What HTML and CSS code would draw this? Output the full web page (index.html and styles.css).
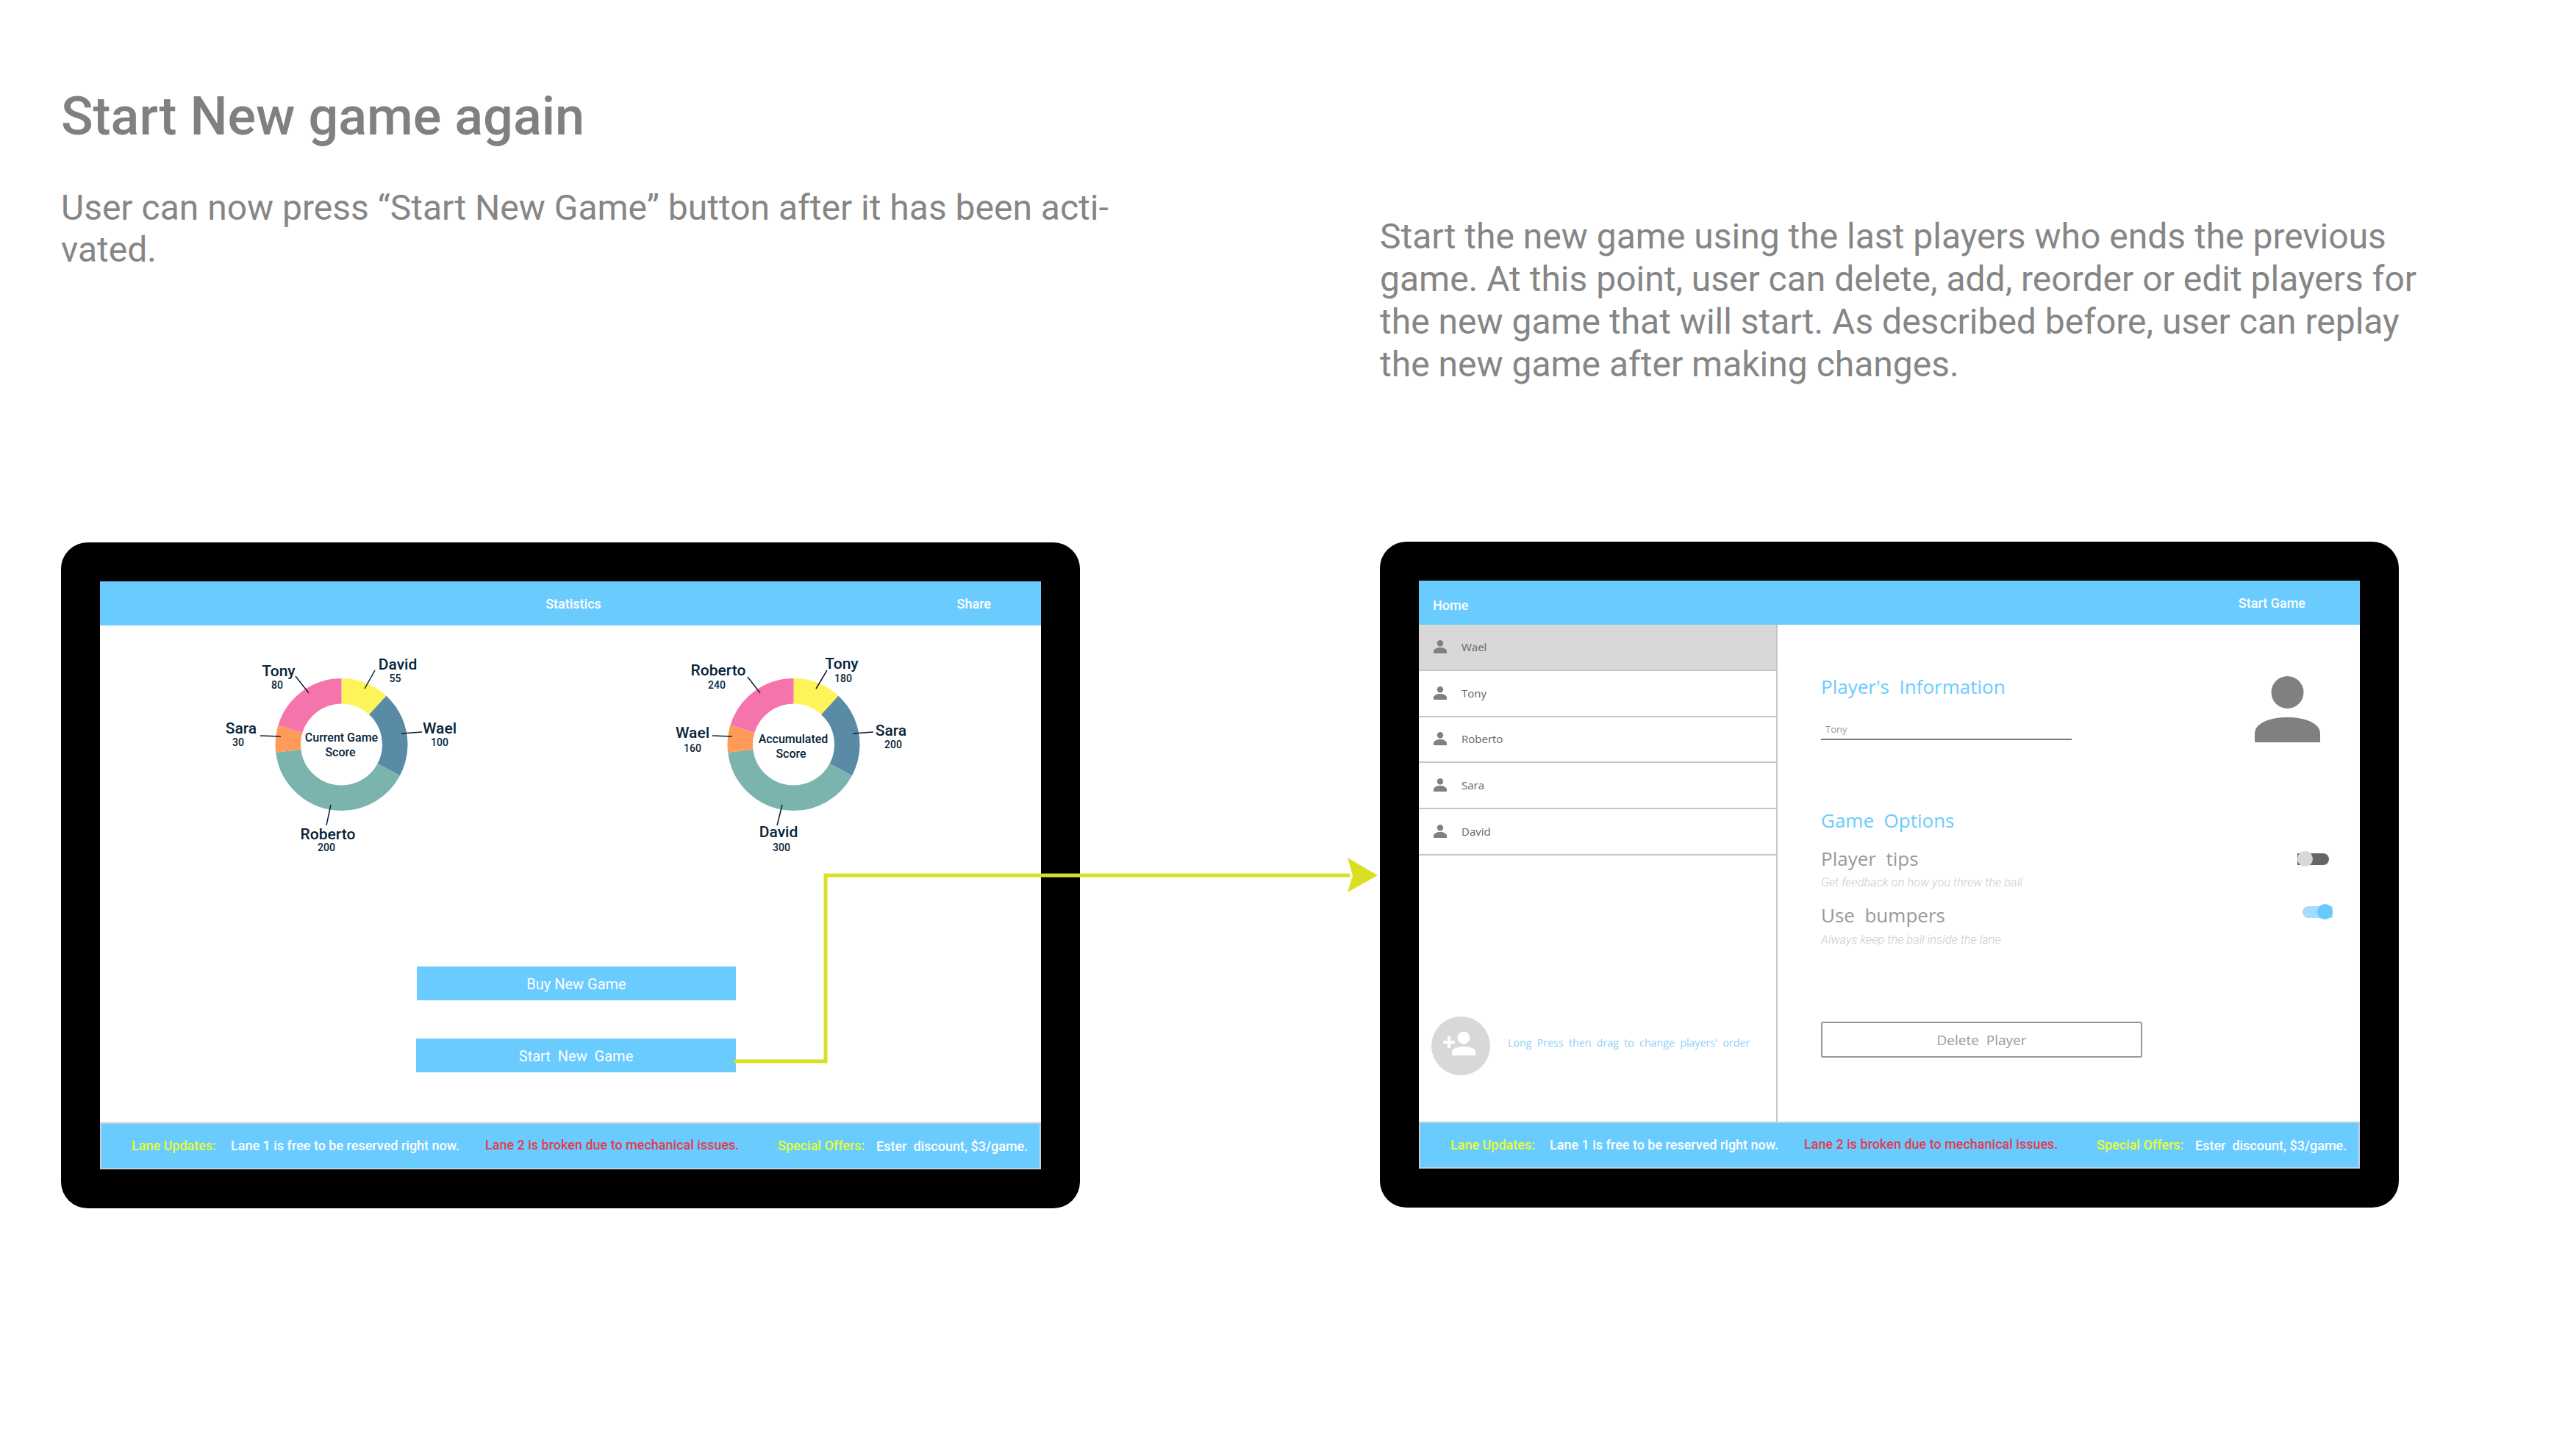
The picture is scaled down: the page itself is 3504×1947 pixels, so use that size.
FILE: index.html
```html
<!DOCTYPE html>
<html>
<head>
  <title>Start New game again</title>
  <link rel="stylesheet" href="styles.css">
</head>
<body>
  <div class="board">

    <section class="note">
      <h1>Start New game again</h1>
      <p>User can now press “Start New Game” button after it has been acti-<br>vated.</p>
    </section>

    <section class="note note-right">
      <p>Start the new game using the last players who ends the previous<br>game. At this point, user can delete, add, reorder or edit players for<br>the new game that will start. As described before, user can replay<br>the new game after making changes.</p>
    </section>

    <!-- tablet 1: statistics -->
    <div class="tablet tablet-left">
      <div class="screen">
        <header class="topbar">
          <span class="topbar-title">Statistics</span>
          <span class="topbar-action">Share</span>
        </header>
        <main class="stats">
          <svg class="charts" viewBox="136 851 1280 330">
            <g transform="translate(464.5 1013)">
              <g class="donut" transform="rotate(-90)">
                <circle r="72.75" pathLength="360" stroke="#fff35a" stroke-dasharray="42.6 360"/>
                <circle r="72.75" pathLength="360" stroke="#5a8ba6" stroke-dasharray="75.4 360" stroke-dashoffset="-42.6"/>
                <circle r="72.75" pathLength="360" stroke="#7bb4ae" stroke-dasharray="145 360" stroke-dashoffset="-118"/>
                <circle r="72.75" pathLength="360" stroke="#ff9a59" stroke-dasharray="24 360" stroke-dashoffset="-263"/>
                <circle r="72.75" pathLength="360" stroke="#f674ac" stroke-dasharray="73 360" stroke-dashoffset="-287"/>
              </g>
            </g>
            <g class="leaders">
              <path d="M402 920 420 943"/>
              <path d="M510 912 496 937"/>
              <path d="M354 1001 382 1002"/>
              <path d="M574 996 546 998"/>
              <path d="M450 1095 444 1123"/>
            </g>
            <text class="name" x="379" y="920">Tony</text>
            <text class="score" x="377" y="937">80</text>
            <text class="name" x="541" y="911">David</text>
            <text class="score" x="537.5" y="928">55</text>
            <text class="name" x="328" y="998">Sara</text>
            <text class="score" x="324" y="1015">30</text>
            <text class="name" x="598" y="998">Wael</text>
            <text class="score" x="598" y="1015">100</text>
            <text class="name" x="446" y="1142">Roberto</text>
            <text class="score" x="444" y="1158">200</text>
            <text class="center" x="464.5" y="1009">Current Game</text>
            <text class="center" x="463" y="1029">Score</text>

            <g transform="translate(1079.5 1013)">
              <g class="donut" transform="rotate(-90)">
                <circle r="72.75" pathLength="360" stroke="#fff35a" stroke-dasharray="42.6 360"/>
                <circle r="72.75" pathLength="360" stroke="#5a8ba6" stroke-dasharray="75.4 360" stroke-dashoffset="-42.6"/>
                <circle r="72.75" pathLength="360" stroke="#7bb4ae" stroke-dasharray="145 360" stroke-dashoffset="-118"/>
                <circle r="72.75" pathLength="360" stroke="#ff9a59" stroke-dasharray="24 360" stroke-dashoffset="-263"/>
                <circle r="72.75" pathLength="360" stroke="#f674ac" stroke-dasharray="73 360" stroke-dashoffset="-287"/>
              </g>
            </g>
            <g class="leaders">
              <path d="M1017 921 1034 943"/>
              <path d="M1125 912 1110 937"/>
              <path d="M969 1001 996 1002"/>
              <path d="M1188 996 1160 998"/>
              <path d="M1064 1095 1057 1123"/>
            </g>
            <text class="name" x="977" y="919">Roberto</text>
            <text class="score" x="975" y="937">240</text>
            <text class="name" x="1145" y="910">Tony</text>
            <text class="score" x="1147" y="928">180</text>
            <text class="name" x="942" y="1004">Wael</text>
            <text class="score" x="942" y="1023">160</text>
            <text class="name" x="1212" y="1001">Sara</text>
            <text class="score" x="1215" y="1018">200</text>
            <text class="name" x="1059" y="1139">David</text>
            <text class="score" x="1063" y="1158">300</text>
            <text class="center" x="1079" y="1011">Accumulated</text>
            <text class="center" x="1076" y="1031">Score</text>
          </svg>
          <div class="stats-actions">
            <button class="blue-btn">Buy New Game</button>
            <button class="blue-btn start-btn">Start  New  Game</button>
          </div>
        </main>
        <footer class="ticker">
          <span class="tick tick-yellow tick-a">Lane Updates:</span>
          <span class="tick tick-b">Lane 1 is free to be reserved right now.</span>
          <span class="tick tick-red tick-c">Lane 2 is broken due to mechanical issues.</span>
          <span class="tick tick-yellow tick-d">Special Offers:</span>
          <span class="tick tick-e">Ester  discount, $3/game.</span>
        </footer>
      </div>
    </div>

    <!-- tablet 2: player setup -->
    <div class="tablet">
      <div class="screen">
        <header class="topbar topbar-home">
          <span class="topbar-home-link">Home</span>
          <span class="topbar-action">Start Game</span>
        </header>
        <div class="setup">
          <aside class="players">
            <ul class="player-list">
              <li class="player player-active">
                <svg class="player-icon" viewBox="0 0 18 18"><circle cx="9" cy="4.2" r="4.2"/><path d="M0 18v-2.6C0 12 4.5 10 9 10s9 2 9 5.4V18z"/></svg>
                Wael
              </li>
              <li class="player">
                <svg class="player-icon" viewBox="0 0 18 18"><circle cx="9" cy="4.2" r="4.2"/><path d="M0 18v-2.6C0 12 4.5 10 9 10s9 2 9 5.4V18z"/></svg>
                Tony
              </li>
              <li class="player">
                <svg class="player-icon" viewBox="0 0 18 18"><circle cx="9" cy="4.2" r="4.2"/><path d="M0 18v-2.6C0 12 4.5 10 9 10s9 2 9 5.4V18z"/></svg>
                Roberto
              </li>
              <li class="player">
                <svg class="player-icon" viewBox="0 0 18 18"><circle cx="9" cy="4.2" r="4.2"/><path d="M0 18v-2.6C0 12 4.5 10 9 10s9 2 9 5.4V18z"/></svg>
                Sara
              </li>
              <li class="player">
                <svg class="player-icon" viewBox="0 0 18 18"><circle cx="9" cy="4.2" r="4.2"/><path d="M0 18v-2.6C0 12 4.5 10 9 10s9 2 9 5.4V18z"/></svg>
                David
              </li>
            </ul>
            <div class="add-row">
              <div class="add-btn">
                <svg viewBox="0 0 80 80" class="add-icon"><circle cx="44" cy="29" r="8.5"/><path d="M28 53v-5c0-4.500 8-7 16-7s16 2.500 16 7v5z"/><path d="M26 33h6v4h-6v6h-4v-6h-6v-4h6v-6h4z"/></svg>
              </div>
              <span class="add-hint">Long  Press  then  drag  to  change  players'  order</span>
            </div>
          </aside>
          <section class="details">
            <div class="info-row">
              <div class="info-form">
                <h2 class="section-title">Player's  Information</h2>
                <div class="field">Tony</div>
              </div>
              <svg class="avatar" viewBox="0 0 89 90"><ellipse cx="44.5" cy="22" rx="22" ry="22"/><path d="M0 90V78C0 64 20 56 44.5 56S89 64 89 78v12z"/></svg>
            </div>
            <h2 class="section-title options-title">Game  Options</h2>
            <div class="option">
              <div>
                <div class="option-name">Player  tips</div>
                <div class="option-hint">Get feedback on how you threw the ball</div>
              </div>
              <span class="toggle"></span>
            </div>
            <div class="option option-second">
              <div>
                <div class="option-name">Use  bumpers</div>
                <div class="option-hint">Always keep the ball inside the lane</div>
              </div>
              <span class="toggle toggle-on"></span>
            </div>
            <button class="delete-btn">Delete  Player</button>
          </section>
        </div>
        <footer class="ticker">
          <span class="tick tick-yellow tick-a">Lane Updates:</span>
          <span class="tick tick-b">Lane 1 is free to be reserved right now.</span>
          <span class="tick tick-red tick-c">Lane 2 is broken due to mechanical issues.</span>
          <span class="tick tick-yellow tick-d">Special Offers:</span>
          <span class="tick tick-e">Ester  discount, $3/game.</span>
        </footer>
      </div>
    </div>

    <!-- arrow from Start New Game to the next screen -->
    <svg class="connector" viewBox="0 0 3504 1947">
      <path class="connector-line" d="M999 1444H1123V1191H1836"/>
      <path class="connector-head" d="M1833 1167 1874 1191 1833 1214 1840 1191z"/>
    </svg>
  </div>
</body>
</html>
```

FILE: styles.css
```css
html, body {
  margin: 0;
  background-color: #fff;
}

body {
  font-family: Roboto, "Liberation Sans", sans-serif;
}

.board {
  position: relative;
  width: 3504px;
  height: 1947px;
  overflow: hidden;
  box-sizing: border-box;
  padding-left: 83px;
  display: grid;
  grid-template-columns: 1386px 1386px;
  grid-template-rows: 737px 906px;
  column-gap: 408px;
}

/* text above the tablets */
.note {
  color: #808080;
}

.note h1 {
  margin: 0;
  padding-top: 117px;
  font-size: 72px;
  line-height: 84px;
  font-weight: 500;
}

.note p {
  margin: 0;
  padding-top: 53px;
  font-size: 48px;
  line-height: 57px;
  font-weight: 400;
  white-space: nowrap;
  color: #868686;
}

.note-right p {
  padding-top: 293px;
  line-height: 58px;
}

/* tablets */
.tablet {
  background-color: #000;
  border-radius: 36px;
  padding: 53px 54px 54px 53px;
  box-sizing: border-box;
  height: 906px;
}

.tablet-left {
  margin-top: 1px;
}

.screen {
  background-color: #fff;
  width: 1280px;
  height: 800px;
  display: flex;
  flex-direction: column;
}

.topbar {
  height: 60px;
  flex-shrink: 0;
  background-color: #6acbff;
  color: #fff;
  font-size: 18px;
  font-weight: 500;
  display: flex;
  align-items: center;
  justify-content: center;
  position: relative;
}

.topbar-title {
  margin-left: 8px;
}

.topbar-action {
  position: absolute;
  right: 68px;
}

.topbar-home {
  justify-content: flex-start;
  padding-left: 19px;
}

.topbar-home .topbar-action {
  right: 74px;
}

.topbar-home-link {
  position: relative;
  top: 3px;
}

/* statistics screen */
.stats {
  flex: 1;
}

.charts {
  display: block;
  width: 1280px;
  height: 330px;
}

.donut circle {
  fill: none;
  stroke-width: 34.5;
}

.leaders path {
  fill: none;
  stroke: #10202c;
  stroke-width: 1.5;
}

.charts text {
  text-anchor: middle;
  fill: #05233a;
  font-weight: 500;
}

.charts .name {
  font-size: 21px;
}

.charts .score {
  font-size: 14px;
}

.charts .center {
  font-size: 16px;
}

.stats-actions {
  display: flex;
  flex-direction: column;
  gap: 52px;
  padding: 134px 0 0 431px;
}

.blue-btn {
  width: 434px;
  height: 46px;
  border: none;
  padding: 2px 0 0;
  background-color: #6acbff;
  color: #fff;
  font-family: inherit;
  font-size: 20px;
  font-weight: 400;
  white-space: pre;
}

.start-btn {
  margin-left: -1px;
  width: 435px;
}

/* lane ticker */
.ticker {
  height: 64px;
  box-sizing: border-box;
  flex-shrink: 0;
  background-color: #6acbff;
  border: 2px solid #bcd2df;
  position: relative;
  font-size: 18px;
  font-weight: 500;
}

.tick {
  position: absolute;
  top: 17px;
  line-height: 26px;
  color: #fff;
  white-space: pre;
}

.tick-yellow {
  color: #eaff2a;
}

.tick-red {
  color: #e23a4c;
  top: 16px;
}

.tick-a { left: 41px; }
.tick-b { left: 176px; }
.tick-c { left: 522px; }
.tick-d { left: 920px; }
.tick-e { left: 1054px; top: 18px; }

/* player setup screen */
.setup {
  flex: 1;
  display: flex;
  min-height: 0;
  font-family: "Open Sans", sans-serif;
}

.players {
  width: 486px;
  border-right: 2px solid #c6c6c6;
  display: flex;
  flex-direction: column;
  justify-content: space-between;
  flex-shrink: 0;
}

.player-list {
  list-style: none;
  margin: 0;
  padding: 0;
}

.player {
  height: 62.75px;
  box-sizing: border-box;
  border-bottom: 2px solid #c6c6c6;
  display: flex;
  align-items: center;
  gap: 20px;
  padding: 0 0 1px 20px;
  font-size: 15px;
  color: #666;
}

.player-active {
  background-color: #d8d8d8;
}

.player-icon {
  width: 18px;
  height: 18px;
  fill: #808080;
}

.add-row {
  display: flex;
  align-items: center;
  gap: 24px;
  padding: 0 0 63px 17px;
}

.add-btn {
  width: 80px;
  height: 80px;
  border-radius: 50%;
  background-color: #d8d8d8;
  flex-shrink: 0;
}

.add-icon {
  display: block;
  width: 80px;
  height: 80px;
  fill: #fff;
}

.add-hint {
  color: #8fd0f5;
  font-size: 14.200px;
  white-space: pre;
  position: relative;
  top: -5px;
}

.details {
  flex: 1;
  padding: 66px 54px 0 59px;
  box-sizing: border-box;
}

.info-row {
  display: flex;
  justify-content: space-between;
  align-items: flex-start;
}

.info-form {
  width: 341px;
}

.section-title {
  margin: 0;
  color: #6acbff;
  font-size: 26px;
  line-height: 36px;
  font-weight: 400;
  white-space: pre;
}

.field {
  margin-top: 31px;
  padding: 0 0 4px 6px;
  font-size: 13px;
  line-height: 18px;
  color: #999;
  border-bottom: 2px solid #777;
}

.avatar {
  width: 89px;
  height: 90px;
  fill: #808080;
  margin-top: 4px;
}

.options-title {
  margin-top: 88px;
}

.option {
  display: flex;
  justify-content: space-between;
  align-items: flex-start;
  margin-top: 16px;
}

.option-second {
  margin-top: 16px;
}

.option-name {
  color: #999;
  font-size: 26px;
  line-height: 36px;
  white-space: pre;
}

.option-hint {
  color: #ccc;
  font-family: Roboto, sans-serif;
  font-style: italic;
  font-weight: 300;
  font-size: 16.400px;
  line-height: 20px;
  margin-top: 5px;
}

.option-second .option-hint {
  margin-top: 6px;
}

.toggle {
  position: relative;
  display: block;
  width: 43px;
  height: 16px;
  margin: 11px -12px 0 0;
  border-radius: 0 8px 8px 0;
  background-color: #666;
}

.toggle::before {
  content: "";
  position: absolute;
  left: 0;
  top: -3px;
  width: 21px;
  height: 21px;
  border-radius: 50%;
  background-color: #d8d8d8;
}

.toggle-on {
  width: 41px;
  margin: 6px -17px 0 0;
  border-radius: 8px 0 0 8px;
  background-color: #a5dcfb;
}

.toggle-on::before {
  left: auto;
  right: 0;
  background-color: #69c8fd;
}

.delete-btn {
  display: block;
  margin-top: 101px;
  width: 437px;
  height: 49px;
  box-sizing: border-box;
  border: 2px solid #999;
  border-radius: 3px;
  background-color: #fff;
  color: #999;
  font-family: inherit;
  font-size: 19px;
  white-space: pre;
}

/* the arrow runs over both tablets */
.connector {
  position: absolute;
  left: 0;
  top: 0;
  width: 3504px;
  height: 1947px;
  pointer-events: none;
}

.connector-line {
  fill: none;
  stroke: #d9e021;
  stroke-width: 5;
}

.connector-head {
  fill: #d9e021;
}
```
